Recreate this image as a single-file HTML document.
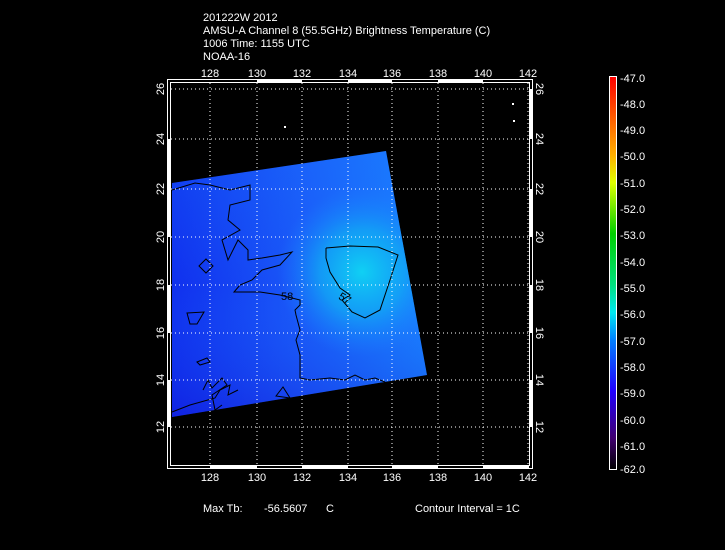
<!DOCTYPE html>
<html><head><style>
body{margin:0;background:#000;width:725px;height:550px;overflow:hidden}
svg{display:block}
text{font-family:"Liberation Sans",sans-serif;fill:#fff;font-size:11px}
</style></head><body>
<svg width="725" height="550" viewBox="0 0 725 550">
<defs>
<linearGradient id="cb" x1="0" y1="1" x2="0" y2="0">
<stop offset="0" stop-color="#000"/>
<stop offset="0.08" stop-color="#400070"/>
<stop offset="0.2" stop-color="#2000ff"/>
<stop offset="0.33" stop-color="#0080ff"/>
<stop offset="0.4" stop-color="#00e8f0"/>
<stop offset="0.47" stop-color="#00e080"/>
<stop offset="0.6" stop-color="#00d000"/>
<stop offset="0.73" stop-color="#e0ff00"/>
<stop offset="0.8" stop-color="#ffb000"/>
<stop offset="1" stop-color="#ff0000"/>
</linearGradient>
<linearGradient id="bg" x1="0" y1="0" x2="1" y2="0">
<stop offset="0" stop-color="#1030ee"/>
<stop offset="0.5" stop-color="#1a58f8"/>
<stop offset="1" stop-color="#1a80ff"/>
</linearGradient>
<radialGradient id="hot" cx="362" cy="272" r="85" gradientUnits="userSpaceOnUse">
<stop offset="0" stop-color="#10d0f4" stop-opacity="1"/>
<stop offset="0.5" stop-color="#10b0f4" stop-opacity="0.7"/>
<stop offset="1" stop-color="#1a80ff" stop-opacity="0"/>
</radialGradient>
<linearGradient id="low" x1="0" y1="0" x2="0" y2="1">
<stop offset="0" stop-color="#1a80ff" stop-opacity="0.25"/>
<stop offset="0.5" stop-color="#1a80ff" stop-opacity="0"/>
<stop offset="1" stop-color="#1000c8" stop-opacity="0.3"/>
</linearGradient>
</defs>
<text x="203" y="21">201222W 2012</text>
<text x="203" y="34">AMSU-A Channel 8 (55.5GHz) Brightness Temperature (C)</text>
<text x="203" y="47">1006 Time: 1155 UTC</text>
<text x="203" y="60">NOAA-16</text>

<polygon points="172,183 386,151 427,375 172,417" fill="url(#bg)"/>
<polygon points="172,183 386,151 427,375 172,417" fill="url(#low)"/>
<polygon points="172,183 386,151 427,375 172,417" fill="url(#hot)"/>
<g fill="none" stroke="#000" stroke-width="1">
<polyline points="326,248 350,246 378,247 398,255 390,280 380,310 365,318 352,312 342,300 350,295 340,288 330,272 326,258 326,248"/>
<polyline points="172,190 195,183 210,185 230,190 250,185 250,200 230,205 228,220 240,230 222,240 228,260 238,240 248,250 248,260 262,258 280,255 292,252 280,265 262,270 252,280 240,285 234,292 260,292 280,295 300,300 300,305 295,310 296,315 300,330 296,340 300,355 300,378 310,380 330,378 345,380 355,375 365,380 375,378 385,382"/>
<polyline points="172,412 190,405 215,398 220,390 230,385 228,395 238,390"/>
<polygon points="199,266 206,259 213,266 206,273"/>
<polygon points="187,313 204,312 197,324 190,324"/>
<polygon points="197,362 207,358 210,362 200,365"/>
<polyline points="203,390 208,380 212,388 222,378 227,385 212,395 215,410 222,405"/>
<polygon points="276,396 283,387 290,398"/>
</g>
<text x="281" y="300" font-size="10" style="fill:#000">58</text>
<text x="339" y="302" font-size="10" style="fill:#000" transform="rotate(30 345 298)">57</text>

<g stroke="#fff" stroke-width="1" stroke-dasharray="1,3" fill="none">
<line x1="210" y1="83" x2="210" y2="466"/><line x1="257" y1="83" x2="257" y2="466"/>
<line x1="302" y1="83" x2="302" y2="466"/><line x1="348" y1="83" x2="348" y2="466"/>
<line x1="392" y1="83" x2="392" y2="466"/><line x1="438" y1="83" x2="438" y2="466"/>
<line x1="483" y1="83" x2="483" y2="466"/><line x1="528" y1="83" x2="528" y2="466"/>
<line x1="171" y1="89" x2="529" y2="89"/><line x1="171" y1="139" x2="529" y2="139"/>
<line x1="171" y1="189" x2="529" y2="189"/><line x1="171" y1="237" x2="529" y2="237"/>
<line x1="171" y1="285" x2="529" y2="285"/><line x1="171" y1="333" x2="529" y2="333"/>
<line x1="171" y1="380" x2="529" y2="380"/><line x1="171" y1="427" x2="529" y2="427"/>
</g>
<g fill="none" stroke="#fff" stroke-width="1">
<rect x="167.5" y="79.5" width="365" height="389"/>
<rect x="170.5" y="82.5" width="359" height="383"/>
</g>
<g fill="#fff">
<rect x="210" y="466" width="47" height="3"/><rect x="302" y="466" width="46" height="3"/>
<rect x="392" y="466" width="46" height="3"/><rect x="483" y="466" width="46" height="3"/>
<rect x="257" y="80" width="45" height="3"/><rect x="348" y="80" width="44" height="3"/>
<rect x="438" y="80" width="45" height="3"/>
<rect x="168" y="139" width="3" height="98"/><rect x="168" y="285" width="3" height="48"/>
<rect x="168" y="380" width="3" height="47"/>
<rect x="529" y="89" width="3" height="50"/><rect x="529" y="189" width="3" height="48"/>
<rect x="529" y="285" width="3" height="48"/><rect x="529" y="380" width="3" height="47"/>
<rect x="284" y="126" width="2" height="2"/><rect x="512" y="103" width="2" height="2"/>
<rect x="513" y="120" width="2" height="2"/>
</g>
<g text-anchor="middle">
<text x="210" y="77">128</text><text x="257" y="77">130</text><text x="302" y="77">132</text>
<text x="348" y="77">134</text><text x="392" y="77">136</text><text x="438" y="77">138</text>
<text x="483" y="77">140</text><text x="528" y="77">142</text>
<text x="210" y="481">128</text><text x="257" y="481">130</text><text x="302" y="481">132</text>
<text x="348" y="481">134</text><text x="392" y="481">136</text><text x="438" y="481">138</text>
<text x="483" y="481">140</text><text x="528" y="481">142</text>
</g>
<g text-anchor="middle">
<text transform="translate(164,89) rotate(-90)">26</text>
<text transform="translate(164,139) rotate(-90)">24</text>
<text transform="translate(164,189) rotate(-90)">22</text>
<text transform="translate(164,237) rotate(-90)">20</text>
<text transform="translate(164,285) rotate(-90)">18</text>
<text transform="translate(164,333) rotate(-90)">16</text>
<text transform="translate(164,380) rotate(-90)">14</text>
<text transform="translate(164,427) rotate(-90)">12</text>
<text transform="translate(536,89) rotate(90)">26</text>
<text transform="translate(536,139) rotate(90)">24</text>
<text transform="translate(536,189) rotate(90)">22</text>
<text transform="translate(536,237) rotate(90)">20</text>
<text transform="translate(536,285) rotate(90)">18</text>
<text transform="translate(536,333) rotate(90)">16</text>
<text transform="translate(536,380) rotate(90)">14</text>
<text transform="translate(536,427) rotate(90)">12</text>
</g>
<text x="203" y="512">Max Tb:</text>
<text x="264" y="512">-56.5607</text>
<text x="326" y="512">C</text>
<text x="415" y="512">Contour Interval = 1C</text>

<rect x="609.5" y="76.5" width="7" height="393" fill="url(#cb)" stroke="#fff"/>
<g>
<text x="620" y="82">-47.0</text><text x="620" y="108">-48.0</text><text x="620" y="134">-49.0</text>
<text x="620" y="160">-50.0</text><text x="620" y="187">-51.0</text><text x="620" y="213">-52.0</text>
<text x="620" y="239">-53.0</text><text x="620" y="266">-54.0</text><text x="620" y="292">-55.0</text>
<text x="620" y="318">-56.0</text><text x="620" y="345">-57.0</text><text x="620" y="371">-58.0</text>
<text x="620" y="397">-59.0</text><text x="620" y="424">-60.0</text><text x="620" y="450">-61.0</text>
<text x="620" y="473">-62.0</text>
</g>
</svg>
</body></html>
